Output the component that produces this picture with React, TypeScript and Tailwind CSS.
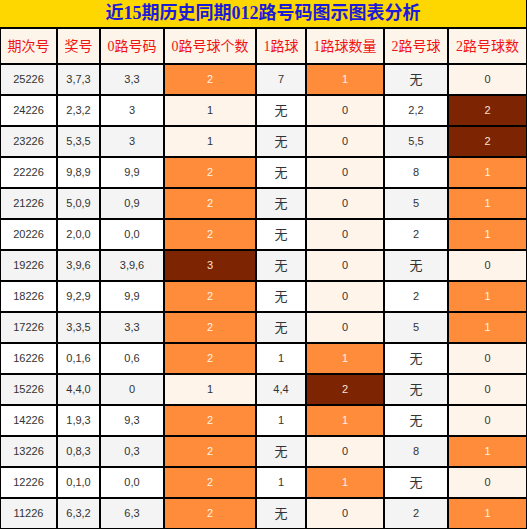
import React from 'react';

type Row = [string, string, string, number, string, number, string, number];

const rows: Row[] = [
  ['25226', '3,7,3', '3,3', 2, '7', 1, '无', 0],
  ['24226', '2,3,2', '3', 1, '无', 0, '2,2', 2],
  ['23226', '5,3,5', '3', 1, '无', 0, '5,5', 2],
  ['22226', '9,8,9', '9,9', 2, '无', 0, '8', 1],
  ['21226', '5,0,9', '0,9', 2, '无', 0, '5', 1],
  ['20226', '2,0,0', '0,0', 2, '无', 0, '2', 1],
  ['19226', '3,9,6', '3,9,6', 3, '无', 0, '无', 0],
  ['18226', '9,2,9', '9,9', 2, '无', 0, '2', 1],
  ['17226', '3,3,5', '3,3', 2, '无', 0, '5', 1],
  ['16226', '0,1,6', '0,6', 2, '1', 1, '无', 0],
  ['15226', '4,4,0', '0', 1, '4,4', 2, '无', 0],
  ['14226', '1,9,3', '9,3', 2, '1', 1, '无', 0],
  ['13226', '0,8,3', '0,3', 2, '无', 0, '8', 1],
  ['12226', '0,1,0', '0,0', 2, '1', 1, '无', 0],
  ['11226', '6,3,2', '6,3', 2, '无', 0, '2', 1],
];

const headers = ['期次号', '奖号', '0路号码', '0路号球个数', '1路球', '1路球数量', '2路号球', '2路号球数'];

// count cells: below hot = cream, hot = orange, above = brown
const countCell = (v: number, hot: number) => {
  if (v > hot) return 'bg-[#7d2402] text-[#f6e2d6]';
  if (v === hot) return 'bg-[#ff8c3a] text-[#fff2e6]';
  return 'bg-[#fef4e9] text-[#333333]';
};

const cell =
  "flex h-[31px] items-center justify-center border border-black text-[11px] font-['Liberation_Sans','Noto_Sans_CJK_SC',sans-serif]";

export default function App() {
  return (
    <div className="w-[527px] bg-white">
      <div className="flex h-[28px] items-center justify-center border-b border-r border-black bg-[#ffd700] font-['Liberation_Serif','Noto_Sans_CJK_SC',serif] text-[18px] font-bold text-[#1c1cd8]">
        近15期历史同期012路号码图示图表分析
      </div>
      <div className="grid grid-cols-[57px_43px_64px_92px_50px_78px_64px_79px]">
        {headers.map((h) => (
          <div
            key={h}
            className="flex h-[36px] items-center justify-center border border-black bg-[#fef5ea] font-['Liberation_Serif','Noto_Sans_CJK_SC',serif] text-[14px] text-[#f01414]"
          >
            {h}
          </div>
        ))}
        {rows.map((r, i) => {
          const stripe = i % 2 === 0 ? 'bg-[#f4f4f4] text-[#333333]' : 'bg-white text-[#333333]';
          return (
            <React.Fragment key={r[0]}>
              <div className={`${cell} ${stripe}`}>{r[0]}</div>
              <div className={`${cell} ${stripe}`}>{r[1]}</div>
              <div className={`${cell} ${stripe}`}>{r[2]}</div>
              <div className={`${cell} ${countCell(r[3], 2)}`}>{r[3]}</div>
              <div className={`${cell} ${stripe} ${r[4] === '无' ? 'text-[13px]' : ''}`}>{r[4]}</div>
              <div className={`${cell} ${countCell(r[5], 1)}`}>{r[5]}</div>
              <div className={`${cell} ${stripe} ${r[6] === '无' ? 'text-[13px]' : ''}`}>{r[6]}</div>
              <div className={`${cell} ${countCell(r[7], 1)}`}>{r[7]}</div>
            </React.Fragment>
          );
        })}
      </div>
    </div>
  );
}
